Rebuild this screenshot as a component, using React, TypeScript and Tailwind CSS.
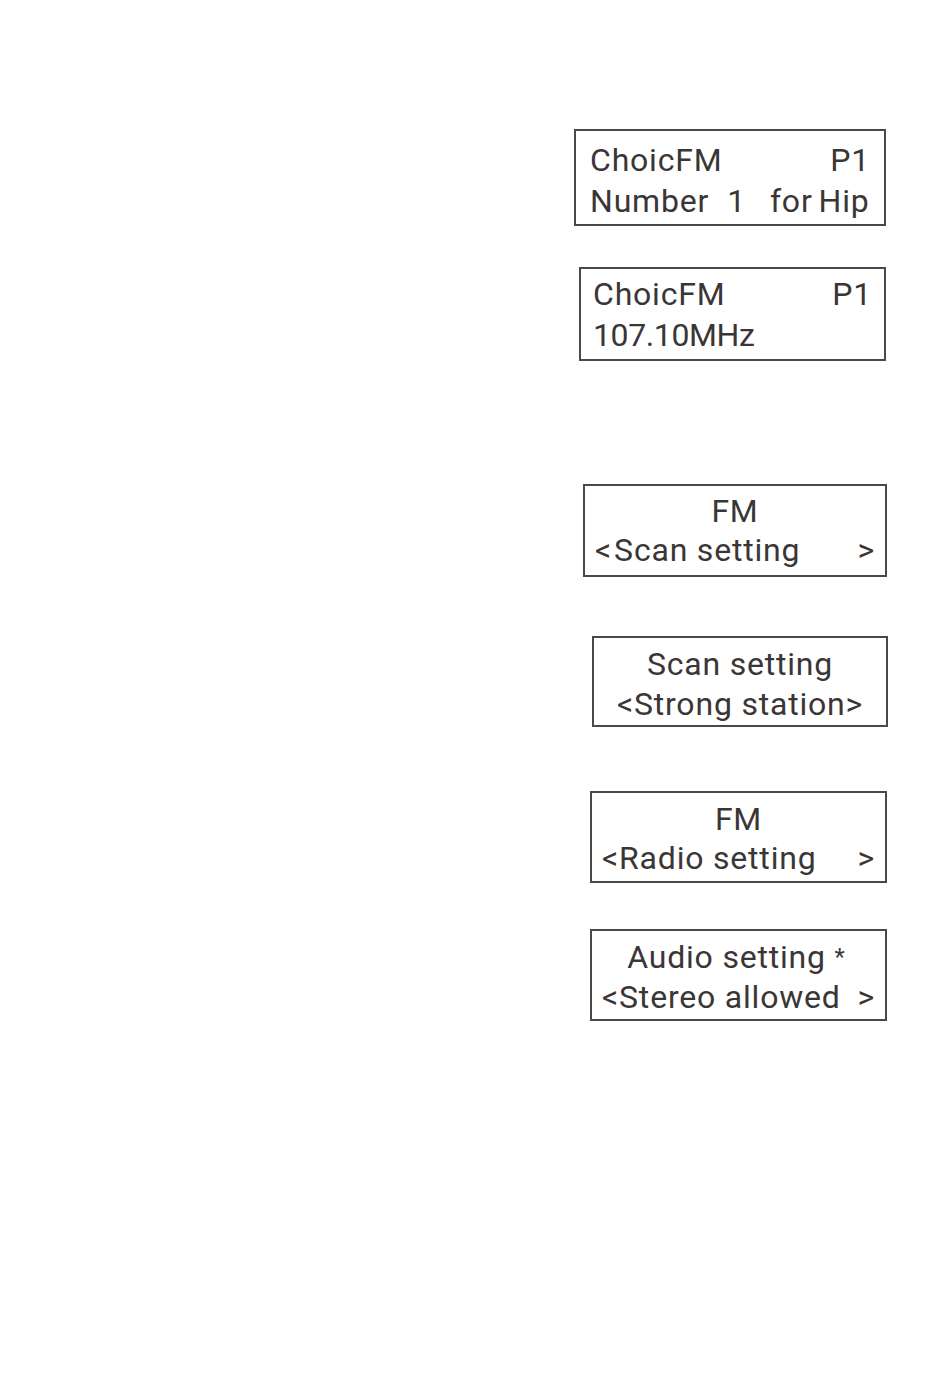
export default function App() {
  return (
    <div className="w-[950px] h-[1397px] bg-white flex flex-col items-end font-['Roboto',sans-serif] text-[#3b3636] text-[32px] tracking-[0.8px] leading-[41px]">
      {/* ChoicFM - RDS text */}
      <div className="mt-[129px] mr-[64px] w-[312px] h-[97px] border-2 border-[#4d4848] px-[14px] pt-[9px]">
        <div className="flex justify-between">
          <span>ChoicFM</span>
          <span>P1</span>
        </div>
        <div className="flex">
          <span>Number</span>
          <span className="ml-[18px]">1</span>
          <span className="ml-[24px]">for</span>
          <span className="ml-[6px]">Hip</span>
        </div>
      </div>

      {/* ChoicFM - frequency */}
      <div className="mt-[41px] mr-[64px] w-[307px] h-[94px] border-2 border-[#4d4848] px-[12px] pt-[5px]">
        <div className="flex justify-between">
          <span>ChoicFM</span>
          <span>P1</span>
        </div>
        <div className="tracking-[-0.4px]">107.10MHz</div>
      </div>

      {/* FM / Scan setting */}
      <div className="mt-[123px] mr-[63px] w-[304px] h-[93px] border-2 border-[#4d4848] px-[10px] pt-[5px]">
        <div className="text-center">FM</div>
        <div className="flex justify-between leading-[36px]">
          <span>
            <span className="mr-[2px]">&lt;</span>Scan setting
          </span>
          <span>&gt;</span>
        </div>
      </div>

      {/* Scan setting / Strong station */}
      <div className="mt-[59px] mr-[62px] w-[296px] h-[91px] border-2 border-[#4d4848] pt-[6px] text-center">
        <div>Scan setting</div>
        <div className="leading-[38px]">&lt;Strong station&gt;</div>
      </div>

      {/* FM / Radio setting */}
      <div className="mt-[64px] mr-[63px] w-[297px] h-[92px] border-2 border-[#4d4848] px-[10px] pt-[6px]">
        <div className="text-center">FM</div>
        <div className="flex justify-between leading-[36px]">
          <span>&lt;Radio setting</span>
          <span>&gt;</span>
        </div>
      </div>

      {/* Audio setting */}
      <div className="mt-[46px] mr-[63px] w-[297px] h-[92px] border-2 border-[#4d4848] px-[10px] pt-[6px]">
        <div className="text-center pr-[4px]">
          Audio setting <span className="text-[24px] align-top">*</span>
        </div>
        <div className="flex justify-between leading-[38px]">
          <span>&lt;Stereo allowed</span>
          <span>&gt;</span>
        </div>
      </div>
    </div>
  );
}
